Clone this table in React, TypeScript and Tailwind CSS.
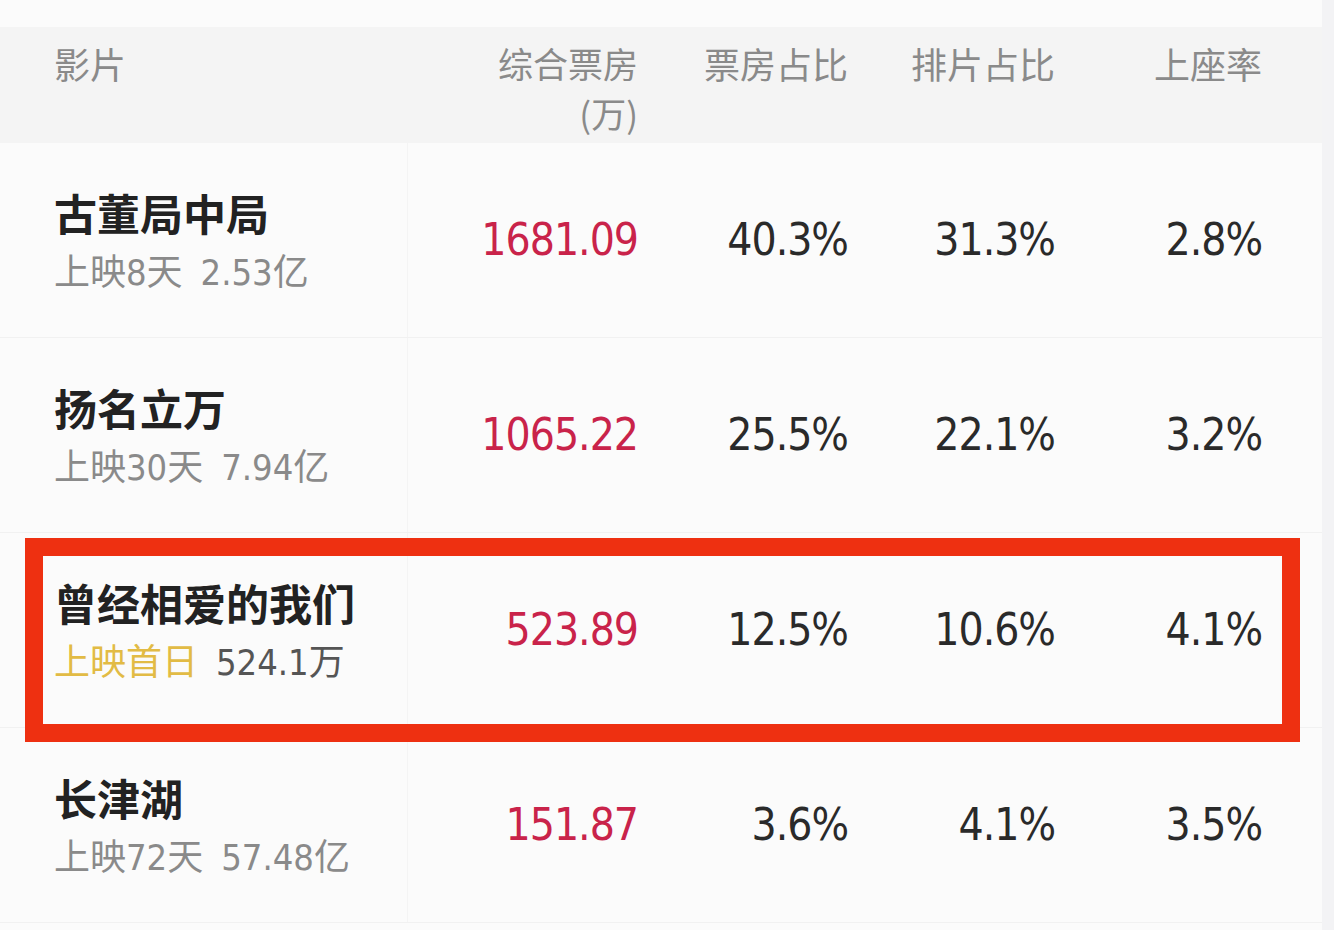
import React from 'react';

type Film = {
    name: string;
    days: string;
    total: string;
    box: string;
    share: string;
    schedule: string;
    seat: string;
    firstDay?: boolean;
};

const films: Film[] = [
    { name: '古董局中局', days: '上映8天', total: '2.53亿', box: '1681.09', share: '40.3%', schedule: '31.3%', seat: '2.8%' },
    { name: '扬名立万', days: '上映30天', total: '7.94亿', box: '1065.22', share: '25.5%', schedule: '22.1%', seat: '3.2%' },
    { name: '曾经相爱的我们', days: '上映首日', total: '524.1万', box: '523.89', share: '12.5%', schedule: '10.6%', seat: '4.1%', firstDay: true },
    { name: '长津湖', days: '上映72天', total: '57.48亿', box: '151.87', share: '3.6%', schedule: '4.1%', seat: '3.5%' },
];

const cjk = "font-['Noto_Sans_CJK_SC',sans-serif]";
const num = "font-['DejaVu_Sans_Condensed','Liberation_Sans_Narrow','Noto_Sans_CJK_SC',sans-serif] [font-stretch:condensed]";
const cell = `text-right text-[44px] tracking-[-1px] ${num}`;

const App: React.FC = () => {
    return (
        <div className="w-[1334px] h-[930px] bg-[#f3f3f5] overflow-hidden">
            <div className="w-[1322px] h-full bg-[#fbfbfb] pt-[27px]">
                {/* header */}
                <div className={`flex h-[116px] bg-[#f4f4f4] text-[36px] leading-[40px] text-[#8a8a8a] pt-[16px] ${cjk}`}>
                    <div className="w-[408px] pl-[54px]">影片</div>
                    <div className="w-[230px] text-right text-[35px] leading-[50px] -mt-[5px]">
                        综合票房<br />(万)
                    </div>
                    <div className="w-[210px] text-right">票房占比</div>
                    <div className="w-[207px] text-right">排片占比</div>
                    <div className="w-[207px] text-right">上座率</div>
                </div>

                {films.map((f) => (
                    <div key={f.name} className="relative flex items-center h-[195px] border-b border-[#f1f1f1]">
                        <div className="w-[408px] h-full pl-[54px] flex flex-col justify-center border-r border-[#f4f4f4]">
                            <div className={`text-[43px] leading-[50px] font-bold text-[#222] ${cjk}`}>{f.name}</div>
                            <div className={`mt-[16px] text-[36px] leading-[40px] text-[#8a8a8a] ${num}`}>
                                <span className={f.firstDay ? 'text-[#e2bb45]' : ''}>{f.days}</span>
                                <span className={`ml-[18px] ${f.firstDay ? 'text-[#555]' : ''}`}>{f.total}</span>
                            </div>
                        </div>
                        <div className={`w-[230px] text-[#c9234a] ${cell}`}>{f.box}</div>
                        <div className={`w-[210px] text-[#2a2a2a] ${cell}`}>{f.share}</div>
                        <div className={`w-[207px] text-[#2a2a2a] ${cell}`}>{f.schedule}</div>
                        <div className={`w-[207px] text-[#2a2a2a] ${cell}`}>{f.seat}</div>
                        {f.firstDay && (
                            <div className="absolute z-10 left-[25px] right-[22px] top-[5px] -bottom-[15px] border-[18px] border-[#ee3011]" />
                        )}
                    </div>
                ))}
            </div>
        </div>
    );
};

export default App;
